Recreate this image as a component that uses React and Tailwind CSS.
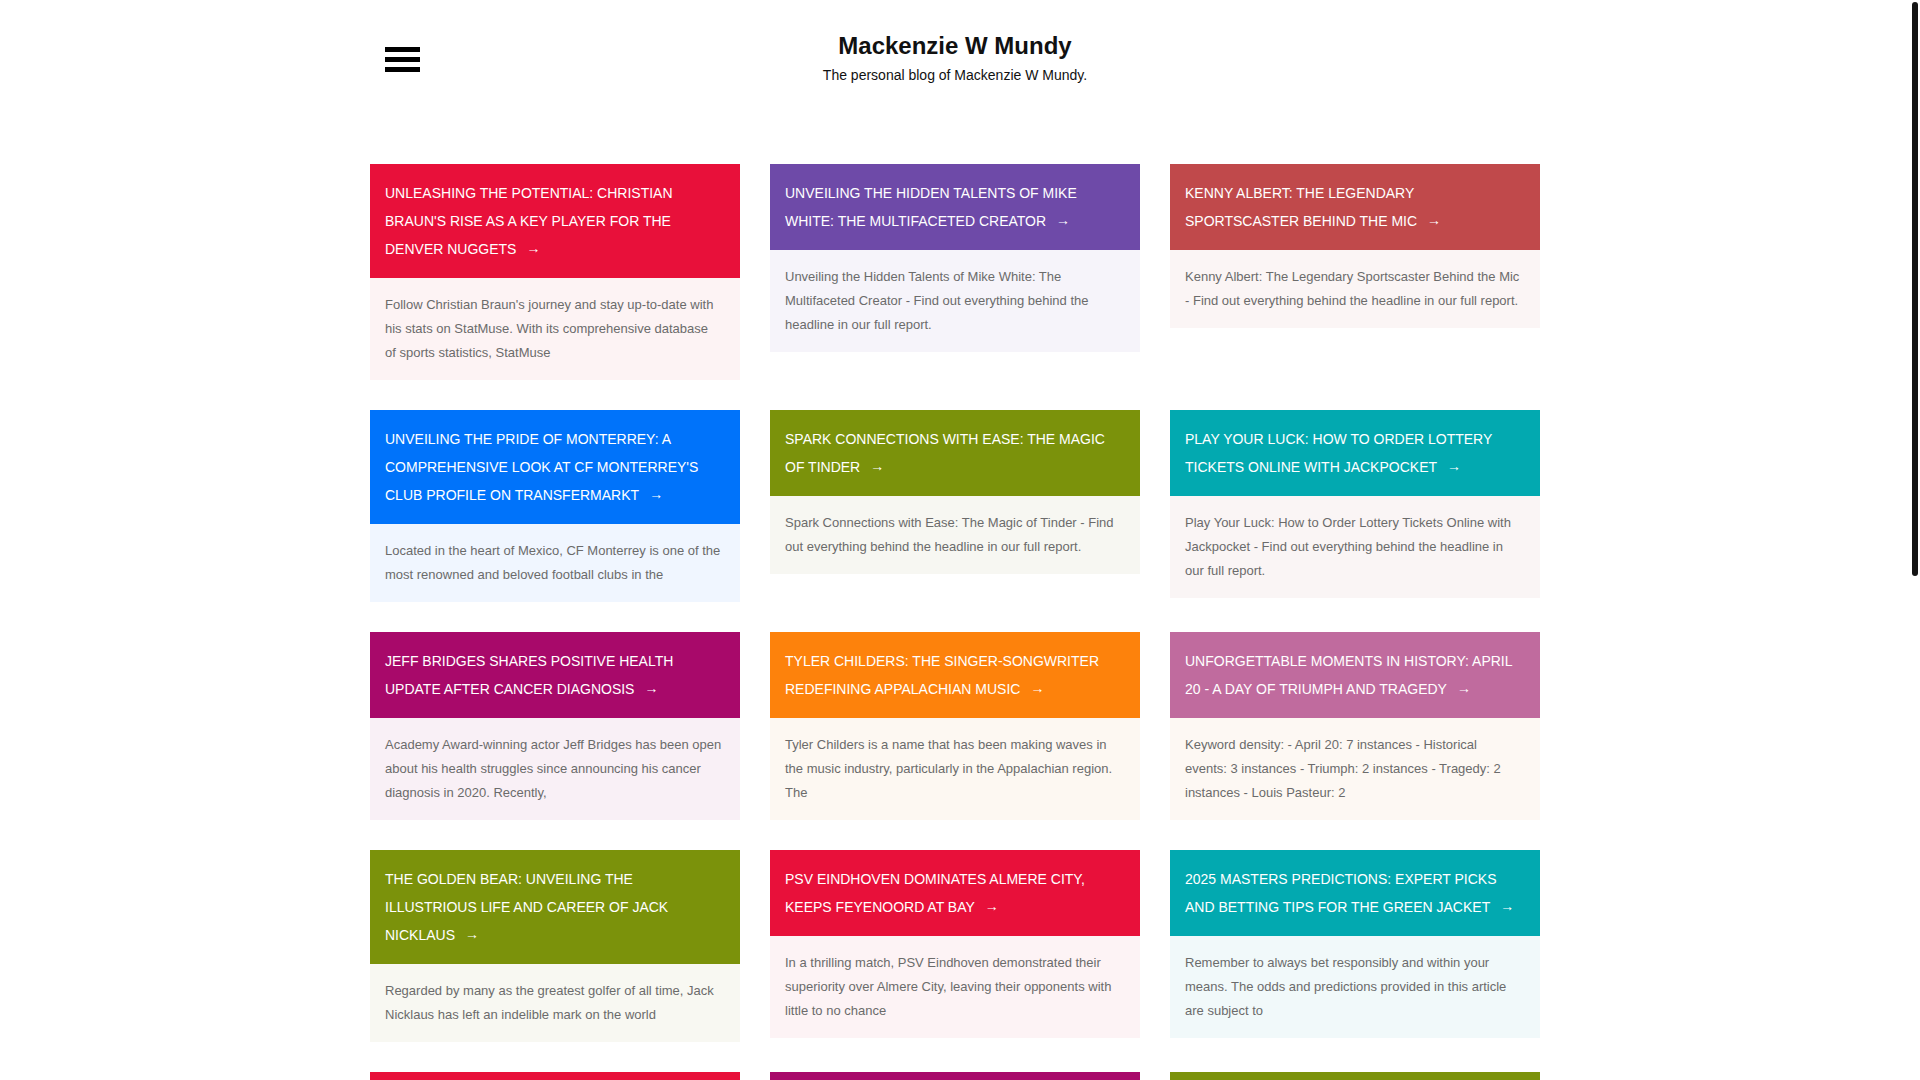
import React from "react";

const posts = [
  {
    title: "UNLEASHING THE POTENTIAL: CHRISTIAN BRAUN'S RISE AS A KEY PLAYER FOR THE DENVER NUGGETS",
    body: "Follow Christian Braun's journey and stay up-to-date with his stats on StatMuse. With its comprehensive database of sports statistics, StatMuse",
    head: "bg-[#e8103a]",
    bg: "bg-[#fdf3f4]",
  },
  {
    title: "UNVEILING THE HIDDEN TALENTS OF MIKE WHITE: THE MULTIFACETED CREATOR",
    body: "Unveiling the Hidden Talents of Mike White: The Multifaceted Creator - Find out everything behind the headline in our full report.",
    head: "bg-[#6e4aa8]",
    bg: "bg-[#f6f4fa]",
  },
  {
    title: "KENNY ALBERT: THE LEGENDARY SPORTSCASTER BEHIND THE MIC",
    body: "Kenny Albert: The Legendary Sportscaster Behind the Mic - Find out everything behind the headline in our full report.",
    head: "bg-[#c0494b]",
    bg: "bg-[#fbf5f5]",
  },
  {
    title: "UNVEILING THE PRIDE OF MONTERREY: A COMPREHENSIVE LOOK AT CF MONTERREY'S CLUB PROFILE ON TRANSFERMARKT",
    body: "Located in the heart of Mexico, CF Monterrey is one of the most renowned and beloved football clubs in the",
    head: "bg-[#0073fa]",
    bg: "bg-[#f0f6ff]",
  },
  {
    title: "SPARK CONNECTIONS WITH EASE: THE MAGIC OF TINDER",
    body: "Spark Connections with Ease: The Magic of Tinder - Find out everything behind the headline in our full report.",
    head: "bg-[#7b920b]",
    bg: "bg-[#f7f7f2]",
  },
  {
    title: "PLAY YOUR LUCK: HOW TO ORDER LOTTERY TICKETS ONLINE WITH JACKPOCKET",
    body: "Play Your Luck: How to Order Lottery Tickets Online with Jackpocket - Find out everything behind the headline in our full report.",
    head: "bg-[#02a9b0]",
    bg: "bg-[#faf5f5]",
  },
  {
    title: "JEFF BRIDGES SHARES POSITIVE HEALTH UPDATE AFTER CANCER DIAGNOSIS",
    body: "Academy Award-winning actor Jeff Bridges has been open about his health struggles since announcing his cancer diagnosis in 2020. Recently,",
    head: "bg-[#a8096a]",
    bg: "bg-[#f9f0f6]",
  },
  {
    title: "TYLER CHILDERS: THE SINGER-SONGWRITER REDEFINING APPALACHIAN MUSIC",
    body: "Tyler Childers is a name that has been making waves in the music industry, particularly in the Appalachian region. The",
    head: "bg-[#fd820c]",
    bg: "bg-[#fdf8f2]",
  },
  {
    title: "UNFORGETTABLE MOMENTS IN HISTORY: APRIL 20 - A DAY OF TRIUMPH AND TRAGEDY",
    body: "Keyword density: - April 20: 7 instances - Historical events: 3 instances - Triumph: 2 instances - Tragedy: 2 instances - Louis Pasteur: 2",
    head: "bg-[#c06b9e]",
    bg: "bg-[#fdf8f3]",
  },
  {
    title: "THE GOLDEN BEAR: UNVEILING THE ILLUSTRIOUS LIFE AND CAREER OF JACK NICKLAUS",
    body: "Regarded by many as the greatest golfer of all time, Jack Nicklaus has left an indelible mark on the world",
    head: "bg-[#7b920b]",
    bg: "bg-[#f8f8f2]",
  },
  {
    title: "PSV EINDHOVEN DOMINATES ALMERE CITY, KEEPS FEYENOORD AT BAY",
    body: "In a thrilling match, PSV Eindhoven demonstrated their superiority over Almere City, leaving their opponents with little to no chance",
    head: "bg-[#e8103a]",
    bg: "bg-[#fdf3f5]",
  },
  {
    title: "2025 MASTERS PREDICTIONS: EXPERT PICKS AND BETTING TIPS FOR THE GREEN JACKET",
    body: "Remember to always bet responsibly and within your means. The odds and predictions provided in this article are subject to",
    head: "bg-[#02a9b0]",
    bg: "bg-[#f1f9fa]",
  },
  {
    title: "BREAKING THE RECORD: A LOOK BACK AT THE SEASON THAT CHANGED EVERYTHING",
    body: "A look back at the season that changed everything - Find out everything behind the headline in our full report.",
    head: "bg-[#e8103a]",
    bg: "bg-[#fdf3f4]",
  },
  {
    title: "BEHIND THE SCENES: HOW THE NEW FESTIVAL LINEUP CAME TOGETHER",
    body: "Behind the Scenes: How the New Festival Lineup Came Together - Find out everything behind the headline in our full report.",
    head: "bg-[#a8096a]",
    bg: "bg-[#f9f0f6]",
  },
  {
    title: "GAME DAY GUIDE: EVERYTHING YOU NEED TO KNOW BEFORE KICKOFF",
    body: "Game Day Guide: Everything You Need to Know Before Kickoff - Find out everything behind the headline in our full report.",
    head: "bg-[#7b920b]",
    bg: "bg-[#f7f7f2]",
  },
];

function Card({ post }) {
  return (
    <article className="flex flex-col">
      <a href="#" className={`${post.head} block p-[15px] text-[14px] leading-[28px] text-white`}>
        {post.title}
        <span className="relative -top-px ml-[10px]">→</span>
      </a>
      <div className={`${post.bg} py-[15px] pl-[15px] pr-[17.6px] text-[13px] leading-[24px] text-[#6b6b6b]`}>
        {post.body}
      </div>
    </article>
  );
}

export default function App() {
  return (
    <div className="min-h-screen bg-white pr-[10px] font-['Liberation_Sans',Arial,sans-serif]">
      <div className="mx-auto w-[1170px]">
        <header className="grid h-[164px] grid-cols-[1fr_auto_1fr] items-start">
          <div className="pl-[15px] pt-[47px]">
            <button className="flex w-[35px] flex-col gap-[5px]" aria-label="menu">
              <span className="block h-[5px] w-[35px] bg-black"></span>
              <span className="block h-[5px] w-[35px] bg-black"></span>
              <span className="block h-[5px] w-[35px] bg-black"></span>
            </button>
          </div>
          <div className="pt-[32px] text-center">
            <h1 className="text-[24px] font-bold leading-[28px] text-[#111]">Mackenzie W Mundy</h1>
            <p className="mt-[5px] text-[14px] leading-[20px] text-[#111]">
              The personal blog of Mackenzie W Mundy.
            </p>
          </div>
          <div></div>
        </header>
        <main className="grid grid-cols-3 items-start gap-[30px] pb-[40px]">
          {posts.map((p, i) => (
            <Card key={i} post={p} />
          ))}
        </main>
      </div>
      <div className="fixed right-[2px] top-[2px] h-[574px] w-[6px] rounded-full bg-[#141414]"></div>
    </div>
  );
}
